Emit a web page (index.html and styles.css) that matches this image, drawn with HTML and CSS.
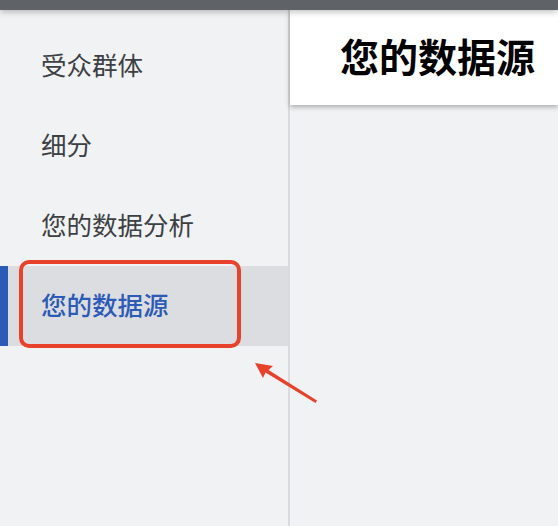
FILE: index.html
```html
<!DOCTYPE html>
<html lang="zh-CN">
<head>
<meta charset="utf-8">
<link rel="stylesheet" href="styles.css">
</head>
<body>
<div class="topbar"></div>
<div class="layout">
  <nav class="sidebar">
    <div class="nav-item">受众群体</div>
    <div class="nav-item">细分</div>
    <div class="nav-item">您的数据分析</div>
    <div class="nav-item active">您的数据源<span class="highlight"></span></div>
  </nav>
  <main class="main">
    <header class="page-header">
      <h1 class="title">您的数据源</h1>
    </header>
  </main>
</div>
<svg class="arrow" width="80" height="50" viewBox="0 0 80 50">
  <polygon points="2,1 20,4 15.5,8 64,38.5 62.5,41 12.5,10.5 10,16" fill="#e8432a"/>
</svg>
</body>
</html>
```
FILE: styles.css
```css
html, body {
  margin: 0;
  padding: 0;
  height: 100%;
  background: #f1f2f4;
  font-family: "Noto Sans CJK SC", "Noto Sans", sans-serif;
  overflow: hidden;
}
.topbar {
  position: relative;
  z-index: 2;
  height: 10px;
  background: #5f6368;
  box-shadow: 0 2px 6px rgba(0,0,0,0.25);
}
.layout {
  display: flex;
  height: 516px;
}
.sidebar {
  width: 288px;
  flex: none;
  border-right: 2px solid #d9dadd;
  background: #f1f2f4;
  padding-top: 16px;
  box-sizing: content-box;
}
.nav-item {
  position: relative;
  height: 80px;
  box-sizing: border-box;
  display: flex;
  align-items: center;
  padding-left: 41px;
  padding-bottom: 5px;
  font-size: 25.5px;
  color: #3c4043;
}
.nav-item.active {
  background: #dcdde0;
  color: #2c5bb7;
  font-weight: 500;
  border-left: 8px solid #2c5bb7;
  padding-left: 33px;
}
.highlight {
  position: absolute;
  left: 11px;
  top: -6px;
  width: 214px;
  height: 80px;
  border: 4px solid #e8432a;
  border-radius: 10px;
}
.main {
  flex: 1;
  background: #f1f2f4;
}
.page-header {
  height: 95px;
  box-sizing: border-box;
  background: #fff;
  display: flex;
  align-items: center;
  padding-left: 50px;
  padding-bottom: 5px;
  box-shadow: 0 2px 5px rgba(0,0,0,0.3);
}
.title {
  margin: 0;
  font-size: 39px;
  font-weight: 700;
  color: #000;
  white-space: nowrap;
}
.arrow {
  position: absolute;
  left: 253px;
  top: 362px;
}
```
